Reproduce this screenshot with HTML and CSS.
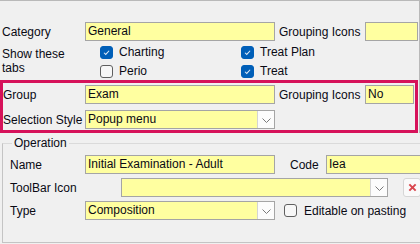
FILE: index.html
```html
<!DOCTYPE html>
<html lang="en">
<head>
  <meta charset="UTF-8" />
  <title>Operation settings</title>
  <link rel="stylesheet" href="styles.css">
</head>
<body>
  <div class="panel">
    <div class="row first">
      <span class="lbl w83">Category</span>
      <div class="field w190">General</div>
      <span class="lbl gi">Grouping Icons</span>
      <div class="field w53"></div>
    </div>

    <div class="tabs">
      <div class="tabs-lbl">Show these<br>tabs</div>
      <div class="checks">
        <div class="chk"><span class="box on"><svg viewBox="0 0 13 13"><polyline points="3.5,6.8 5.6,8.8 9.6,4.4" /></svg></span>Charting</div>
        <div class="chk"><span class="box on"><svg viewBox="0 0 13 13"><polyline points="3.5,6.8 5.6,8.8 9.6,4.4" /></svg></span>Treat Plan</div>
        <div class="chk"><span class="box"></span>Perio</div>
        <div class="chk"><span class="box on"><svg viewBox="0 0 13 13"><polyline points="3.5,6.8 5.6,8.8 9.6,4.4" /></svg></span>Treat</div>
      </div>
    </div>

    <div class="highlight">
      <div class="row">
        <span class="lbl w82">Group</span>
        <div class="field w190">Exam</div>
        <span class="lbl gi">Grouping Icons</span>
        <div class="field w49">No</div>
      </div>
      <div class="row second">
        <span class="lbl w82">Selection Style</span>
        <div class="field combo w190">Popup menu
          <span class="drop"><svg viewBox="0 0 9 5"><polyline points="0.5,0.5 4.5,4.5 8.5,0.5" /></svg></span>
        </div>
      </div>
    </div>
  </div>

  <fieldset class="operation">
    <legend>Operation</legend>
    <div class="row">
      <span class="lbl w75">Name</span>
      <div class="field w190">Initial Examination - Adult</div>
      <span class="lbl code">Code</span>
      <div class="field w100">Iea</div>
    </div>
    <div class="row next">
      <span class="lbl w111">ToolBar Icon</span>
      <div class="field combo w267">
        <span class="drop"><svg viewBox="0 0 9 5"><polyline points="0.5,0.5 4.5,4.5 8.5,0.5" /></svg></span>
      </div>
      <span class="clear"><svg viewBox="0 0 10 10"><path d="M1.5 1.5 L8.5 8.5 M8.5 1.5 L1.5 8.5" /></svg></span>
    </div>
    <div class="row next">
      <span class="lbl w75">Type</span>
      <div class="field combo w190">Composition
        <span class="drop"><svg viewBox="0 0 9 5"><polyline points="0.5,0.5 4.5,4.5 8.5,0.5" /></svg></span>
      </div>
      <div class="chk paste"><span class="box"></span>Editable on pasting</div>
    </div>
  </fieldset>
</body>
</html>
```

FILE: styles.css
```css
body {
  margin: 0;
  width: 420px;
  height: 244px;
  overflow: hidden;
  background: #f0f0f0;
  font-family: 'Liberation Sans', Arial, sans-serif;
  font-size: 12px;
  color: #0a0a14;
}

.panel {
  width: 420px;
  box-sizing: border-box;
  border-top: 1px solid #b9b9b9;
  border-right: 1px solid #b9b9b9;
  padding-top: 21px;
}

.row {
  display: flex;
  align-items: center;
  height: 19px;
}

.row.first {
  padding-left: 2px;
}

.row.second {
  margin-top: 6px;
}

.row.next {
  margin-top: 4px;
}

.lbl {
  white-space: nowrap;
  flex: none;
}

.w75 { width: 75px; }
.w82 { width: 82px; }
.w83 { width: 83px; }
.w111 { width: 111px; }

.gi {
  width: 86px;
  margin-left: 4px;
}

.code {
  width: 36px;
  margin-left: 15px;
}

.field {
  position: relative;
  flex: none;
  height: 19px;
  box-sizing: border-box;
  border: 1px solid #a5a5a5;
  background: #ffffa0;
  padding: 0 2px;
  line-height: 17px;
  white-space: nowrap;
  overflow: hidden;
}

.w49 { width: 49px; }
.w53 { width: 53px; }
.w100 { width: 100px; }
.w190 { width: 190px; }
.w267 { width: 267px; }

.drop {
  position: absolute;
  top: 0;
  right: 0;
  width: 17px;
  height: 17px;
  box-sizing: border-box;
  background: #fcfcfc;
  border-left: 1px solid #d4d4d4;
  display: flex;
  align-items: center;
  justify-content: center;
}

.drop svg {
  width: 9px;
  height: 5px;
  margin-top: 2px;
  fill: none;
  stroke: #7a7a7a;
  stroke-width: 1;
}

.tabs {
  display: flex;
  margin-top: 2px;
  padding-left: 2px;
}

.tabs-lbl {
  width: 98px;
  line-height: 14px;
  padding-top: 4px;
}

.checks {
  display: grid;
  grid-template-columns: 141px 141px;
  grid-template-rows: 19px 18px;
}

.chk {
  display: flex;
  align-items: center;
  gap: 6px;
  white-space: nowrap;
}

.checks .chk {
  align-items: flex-start;
  line-height: 19px;
}

.checks .box {
  margin-top: 3px;
}

.box {
  width: 13px;
  height: 13px;
  box-sizing: border-box;
  border: 1px solid #5f5f5f;
  border-radius: 3px;
  background: #f7f7f7;
  flex: none;
}

.box.on {
  background: #005fb8;
  border-color: #005fb8;
}

.box svg {
  display: block;
  width: 11px;
  height: 11px;
  fill: none;
  stroke: #dfeaf6;
  stroke-width: 1.2;
}

.highlight {
  width: 418px;
  box-sizing: border-box;
  border: 3px solid #d6125a;
  padding: 2px 0 1px;
}

.operation {
  margin: 3px 0 0 2px;
  width: 440px;
  height: 107px;
  box-sizing: border-box;
  padding: 0;
  border: 1px solid #c4c4c4;
  border-top-color: #dadada;
}

.operation legend {
  margin-left: 9px;
  padding: 0 2px;
  line-height: 14px;
}

.operation .row:first-of-type {
  margin-top: 5px;
}

.operation .row {
  padding-left: 7px;
}

.clear {
  flex: none;
  margin-left: 15px;
  width: 18px;
  height: 19px;
  box-sizing: border-box;
  border: 1px solid #d6d6d6;
  border-radius: 3px;
  background: #fafafa;
  display: flex;
  align-items: center;
  justify-content: center;
}

.clear svg {
  width: 9px;
  height: 9px;
  fill: none;
  stroke: #d9474f;
  stroke-width: 2.2;
}

.paste {
  margin-left: 9px;
  gap: 7px;
}
```
